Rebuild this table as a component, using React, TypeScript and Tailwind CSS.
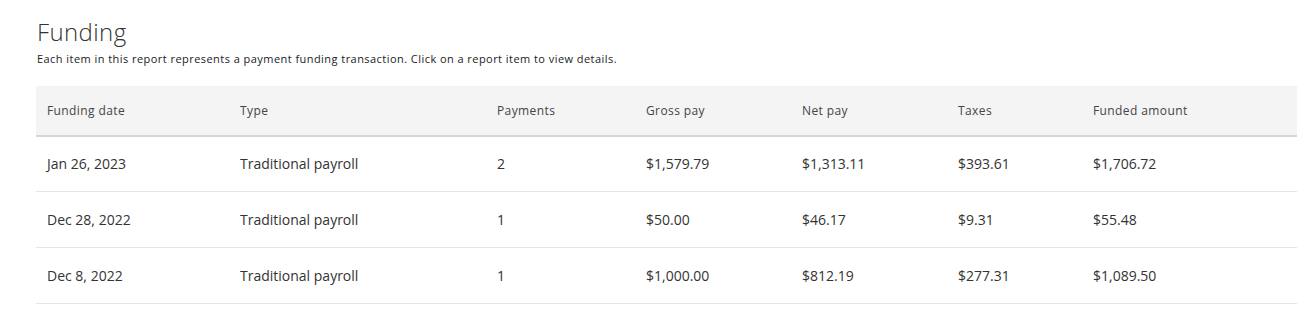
import React from "react";

const rows = [
  ["Jan 26, 2023", "Traditional payroll", "2", "$1,579.79", "$1,313.11", "$393.61", "$1,706.72"],
  ["Dec 28, 2022", "Traditional payroll", "1", "$50.00", "$46.17", "$9.31", "$55.48"],
  ["Dec 8, 2022", "Traditional payroll", "1", "$1,000.00", "$812.19", "$277.31", "$1,089.50"],
];

const headers = ["Funding date", "Type", "Payments", "Gross pay", "Net pay", "Taxes", "Funded amount"];

const cols = "grid grid-cols-[193px_257px_149px_156px_156px_135px_1fr]";

export default function App() {
  return (
    <div
      className="w-[1316px] h-[333px] bg-white text-[#333333] pl-[36px] pr-[19px] pt-[16px]"
      style={{ fontFamily: '"Open Sans", "Noto Sans", sans-serif' }}
    >
      <h1 className="text-[24px] leading-8 font-light tracking-[0.4px] text-[#333333] pl-[1px]">Funding</h1>
      <p className="text-[11px] leading-4 mt-[3px] tracking-[0.45px] text-[#222222] pl-[1px]">
        Each item in this report represents a payment funding transaction. Click on a report item to view details.
      </p>
      <div className="mt-[19px]">
        <div className={`${cols} h-[51px] bg-[#f4f4f4] border-b-2 border-[#d6d6d6] items-center text-[12px] leading-4 tracking-[0.4px] text-[#444444]`}>
          {headers.map((h) => (
            <div key={h} className="pl-[11px]">{h}</div>
          ))}
        </div>
        {rows.map((r, i) => (
          <div
            key={i}
            className={`${cols} ${i === 0 ? "h-[55px]" : "h-[56px]"} border-b border-[#e5e5e5] items-center text-[14px] leading-5 text-[#333333]`}
          >
            {r.map((c, j) => (
              <div key={j} className="pl-[11px]">{c}</div>
            ))}
          </div>
        ))}
      </div>
    </div>
  );
}
